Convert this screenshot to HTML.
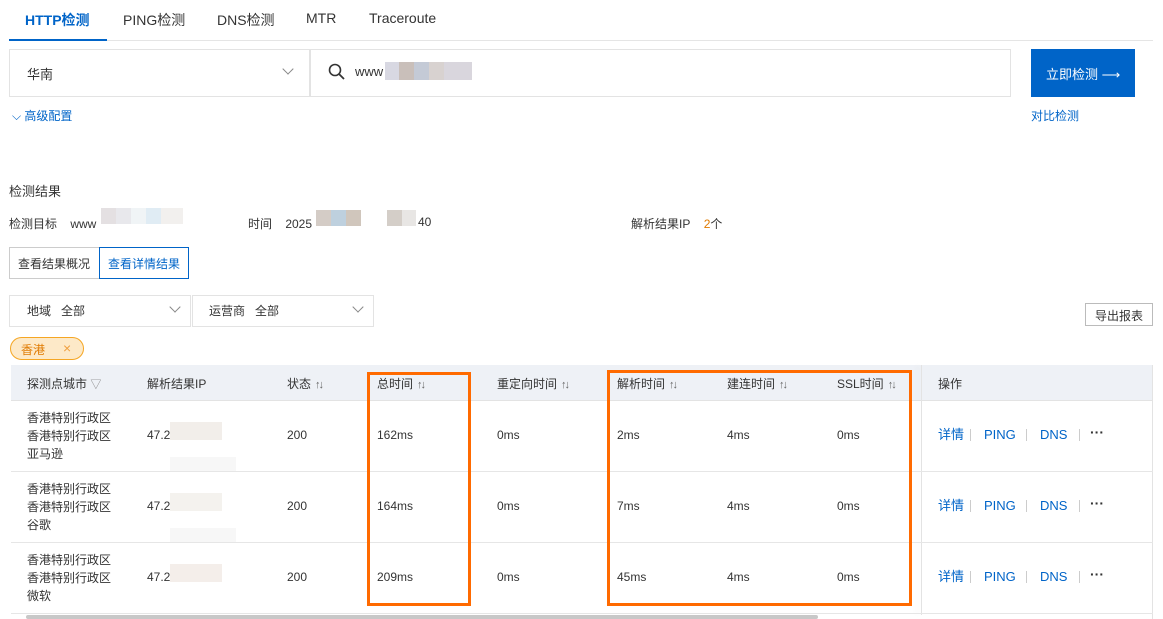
<!DOCTYPE html>
<html><head><meta charset="utf-8"><style>
*{margin:0;padding:0;box-sizing:border-box}
body{width:1163px;height:619px;overflow:hidden;background:#fff;font-family:"Liberation Sans","Noto Sans CJK SC",sans-serif;font-size:12px;color:#333;position:relative}
.a{position:absolute;white-space:nowrap}
.blue{color:#0064c8}
.bx{position:absolute}
.chev{position:absolute;width:8px;height:8px;border-right:1.3px solid #888;border-bottom:1.3px solid #888;transform:rotate(45deg)}
.sort{color:#666;font-size:11px;letter-spacing:-2px;margin-left:4px}
.sep{position:absolute;width:1px;height:12px;background:#ccc}
.op{position:absolute;white-space:nowrap;color:#0064c8;font-size:13px;line-height:16px}
</style></head><body>
<div class="a" style="left:25px;top:10px;font-size:14px;font-weight:bold;color:#0064c8">HTTP检测</div>
<div class="a" style="left:123px;top:10px;font-size:14px;color:#333">PING检测</div>
<div class="a" style="left:217px;top:10px;font-size:14px;color:#333">DNS检测</div>
<div class="a" style="left:306px;top:10px;font-size:14px;color:#333">MTR</div>
<div class="a" style="left:369px;top:10px;font-size:14px;color:#333">Traceroute</div>
<div class="bx" style="left:9px;top:40px;width:1144px;height:1px;background:#e5e5e5"></div>
<div class="bx" style="left:9px;top:39px;width:98px;height:2px;background:#0064c8"></div>
<div class="bx" style="left:9px;top:49px;width:301px;height:48px;border:1px solid #e3e3e3"></div>
<div class="a" style="left:27px;top:64px;font-size:13px">华南</div>
<div class="chev" style="left:284px;top:65px"></div>
<div class="bx" style="left:310px;top:49px;width:701px;height:48px;border:1px solid #e3e3e3"></div>
<svg class="bx" style="left:327px;top:62px" width="20" height="20" viewBox="0 0 20 20"><circle cx="8" cy="8" r="5.5" fill="none" stroke="#333" stroke-width="1.6"/><path d="M12 12l5 5" stroke="#333" stroke-width="1.8"/></svg>
<div class="a" style="left:355px;top:64px;font-size:13px">www</div>
<div class="bx" style="left:385px;top:62px;width:14px;height:18px;background:#d8d8e2"></div>
<div class="bx" style="left:399px;top:62px;width:15px;height:18px;background:#c9bfba"></div>
<div class="bx" style="left:414px;top:62px;width:15px;height:18px;background:#c4cad6"></div>
<div class="bx" style="left:429px;top:62px;width:15px;height:18px;background:#d8d2d0"></div>
<div class="bx" style="left:444px;top:62px;width:28px;height:18px;background:#d9d6dd"></div>
<div class="bx" style="left:1031px;top:49px;width:104px;height:48px;background:#0064c8"></div>
<div class="a" style="left:1046px;top:64px;font-size:13px;color:#fff">立即检测 ⟶</div>
<div class="a blue" style="left:12px;top:107px;font-size:12px">⌵ 高级配置</div>
<div class="a blue" style="left:1031px;top:107px;font-size:12px">对比检测</div>
<div class="a" style="left:9px;top:181px;font-size:13px">检测结果</div>
<div class="a" style="left:9px;top:215px">检测目标&nbsp;&nbsp;&nbsp;&nbsp;www</div>
<div class="bx" style="left:101px;top:208px;width:15px;height:16px;background:#e4e0e2"></div>
<div class="bx" style="left:116px;top:208px;width:15px;height:16px;background:#e8e8ec"></div>
<div class="bx" style="left:131px;top:208px;width:15px;height:16px;background:#f0f4f6"></div>
<div class="bx" style="left:146px;top:208px;width:15px;height:16px;background:#e0ecf4"></div>
<div class="bx" style="left:161px;top:208px;width:22px;height:16px;background:#f2f0ee"></div>
<div class="a" style="left:248px;top:215px">时间&nbsp;&nbsp;&nbsp;&nbsp;2025</div>
<div class="bx" style="left:316px;top:210px;width:15px;height:16px;background:#d4ccc6"></div>
<div class="bx" style="left:331px;top:210px;width:15px;height:16px;background:#bed0de"></div>
<div class="bx" style="left:346px;top:210px;width:15px;height:16px;background:#d0c6bc"></div>
<div class="bx" style="left:387px;top:210px;width:15px;height:16px;background:#d4cec8"></div>
<div class="bx" style="left:402px;top:210px;width:14px;height:16px;background:#e8e6e4"></div>
<div class="a" style="left:418px;top:215px">40</div>
<div class="a" style="left:631px;top:215px">解析结果IP&nbsp;&nbsp;&nbsp;&nbsp;<span style="color:#e07a00">2</span>个</div>
<div class="bx" style="left:9px;top:247px;width:91px;height:32px;border:1px solid #ccc;border-right:none"></div>
<div class="a" style="left:18px;top:255px">查看结果概况</div>
<div class="bx" style="left:99px;top:247px;width:90px;height:32px;border:1px solid #0064c8"></div>
<div class="a blue" style="left:108px;top:255px">查看详情结果</div>
<div class="bx" style="left:9px;top:295px;width:182px;height:32px;border:1px solid #e3e3e3"></div>
<div class="a" style="left:27px;top:302px">地域&nbsp;&nbsp;&nbsp;全部</div>
<div class="chev" style="left:171px;top:303px"></div>
<div class="bx" style="left:192px;top:295px;width:182px;height:32px;border:1px solid #e3e3e3"></div>
<div class="a" style="left:209px;top:302px">运营商&nbsp;&nbsp;&nbsp;全部</div>
<div class="chev" style="left:354px;top:303px"></div>
<div class="bx" style="left:1085px;top:303px;width:68px;height:23px;border:1px solid #bbb"></div>
<div class="a" style="left:1095px;top:307px">导出报表</div>
<div class="bx" style="left:10px;top:337px;width:74px;height:23px;border:1px solid #f5a623;background:#fde9c8;border-radius:12px"></div>
<div class="a" style="left:21px;top:341px;color:#e07a00">香港</div>
<div class="a" style="left:63px;top:340px;color:#f0a040;font-size:14px">×</div>
<div class="bx" style="left:11px;top:365px;width:1142px;height:36px;background:#eef1f6;border-bottom:1px solid #e3e3e3"></div>
<div class="bx" style="left:1152px;top:365px;width:1px;height:254px;background:#e3e3e3"></div>
<div class="bx" style="left:921px;top:365px;width:1px;height:250px;background:#e3e3e3;box-shadow:-4px 0 6px rgba(0,0,0,.08)"></div>
<div class="bx" style="left:11px;top:471px;width:1142px;height:1px;background:#e6e6e6"></div>
<div class="bx" style="left:11px;top:542px;width:1142px;height:1px;background:#e6e6e6"></div>
<div class="bx" style="left:11px;top:613px;width:1142px;height:1px;background:#e6e6e6"></div>
<div class="bx" style="left:26px;top:615px;width:792px;height:4px;background:#c8c8c8;border-radius:2px"></div>
<div class="a" style="left:27px;top:375px">探测点城市 <span style="color:#888;font-size:11px">▽</span></div>
<div class="a" style="left:147px;top:375px">解析结果IP</div>
<div class="a" style="left:287px;top:375px">状态<span class="sort">↑↓</span></div>
<div class="a" style="left:377px;top:375px">总时间<span class="sort">↑↓</span></div>
<div class="a" style="left:497px;top:375px">重定向时间<span class="sort">↑↓</span></div>
<div class="a" style="left:617px;top:375px">解析时间<span class="sort">↑↓</span></div>
<div class="a" style="left:727px;top:375px">建连时间<span class="sort">↑↓</span></div>
<div class="a" style="left:837px;top:375px">SSL时间<span class="sort">↑↓</span></div>
<div class="a" style="left:938px;top:375px">操作</div>
<div class="a" style="left:27px;top:409px;line-height:18px">香港特别行政区<br>香港特别行政区<br>亚马逊</div>
<div class="a" style="left:27px;top:480px;line-height:18px">香港特别行政区<br>香港特别行政区<br>谷歌</div>
<div class="a" style="left:27px;top:551px;line-height:18px">香港特别行政区<br>香港特别行政区<br>微软</div>
<div class="a" style="left:147px;top:428px">47.2</div>
<div class="bx" style="left:170px;top:422px;width:52px;height:18px;background:#f2eeea"></div>
<div class="bx" style="left:170px;top:457px;width:66px;height:14px;background:#f7f7f7"></div>
<div class="a" style="left:147px;top:499px">47.2</div>
<div class="bx" style="left:170px;top:493px;width:52px;height:18px;background:#f4f2ee"></div>
<div class="bx" style="left:170px;top:528px;width:66px;height:14px;background:#f7f7f7"></div>
<div class="a" style="left:147px;top:570px">47.2</div>
<div class="bx" style="left:170px;top:564px;width:52px;height:18px;background:#f4eeea"></div>
<div class="a" style="left:287px;top:428px">200</div><div class="a" style="left:287px;top:499px">200</div><div class="a" style="left:287px;top:570px">200</div>
<div class="a" style="left:377px;top:428px">162ms</div><div class="a" style="left:377px;top:499px">164ms</div><div class="a" style="left:377px;top:570px">209ms</div>
<div class="a" style="left:497px;top:428px">0ms</div><div class="a" style="left:497px;top:499px">0ms</div><div class="a" style="left:497px;top:570px">0ms</div>
<div class="a" style="left:617px;top:428px">2ms</div><div class="a" style="left:617px;top:499px">7ms</div><div class="a" style="left:617px;top:570px">45ms</div>
<div class="a" style="left:727px;top:428px">4ms</div><div class="a" style="left:727px;top:499px">4ms</div><div class="a" style="left:727px;top:570px">4ms</div>
<div class="a" style="left:837px;top:428px">0ms</div><div class="a" style="left:837px;top:499px">0ms</div><div class="a" style="left:837px;top:570px">0ms</div>

<div class="op" style="left:938px;top:427px">详情</div><div class="sep" style="left:970px;top:429px"></div><div class="op" style="left:984px;top:427px">PING</div><div class="sep" style="left:1026px;top:429px"></div><div class="op" style="left:1040px;top:427px">DNS</div><div class="sep" style="left:1079px;top:429px"></div><div class="a" style="left:1090px;top:424px;font-size:14px;font-weight:bold">···</div>
<div class="op" style="left:938px;top:498px">详情</div><div class="sep" style="left:970px;top:500px"></div><div class="op" style="left:984px;top:498px">PING</div><div class="sep" style="left:1026px;top:500px"></div><div class="op" style="left:1040px;top:498px">DNS</div><div class="sep" style="left:1079px;top:500px"></div><div class="a" style="left:1090px;top:495px;font-size:14px;font-weight:bold">···</div>
<div class="op" style="left:938px;top:569px">详情</div><div class="sep" style="left:970px;top:571px"></div><div class="op" style="left:984px;top:569px">PING</div><div class="sep" style="left:1026px;top:571px"></div><div class="op" style="left:1040px;top:569px">DNS</div><div class="sep" style="left:1079px;top:571px"></div><div class="a" style="left:1090px;top:566px;font-size:14px;font-weight:bold">···</div>

<div class="bx" style="left:367px;top:372px;width:104px;height:234px;border:3px solid #ff6a00"></div>
<div class="bx" style="left:607px;top:370px;width:305px;height:236px;border:3px solid #ff6a00"></div>
</body></html>
